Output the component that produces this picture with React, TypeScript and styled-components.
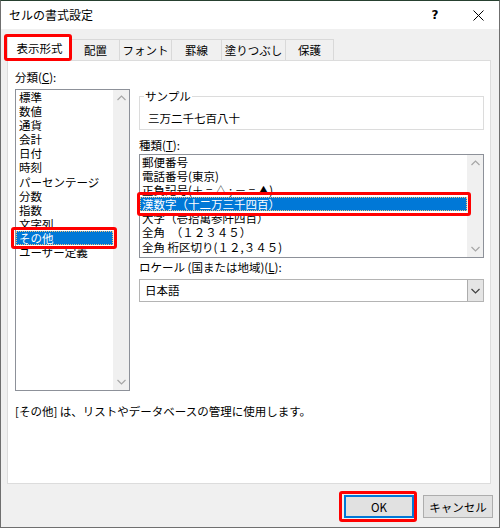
import React from 'react';
import styled, { createGlobalStyle, css } from 'styled-components';

const GlobalStyle = createGlobalStyle`
  html, body {
    margin: 0;
    padding: 0;
    background: #ffffff;
  }
  body {
    font-family: 'Noto Sans CJK JP', 'Noto Sans', sans-serif;
  }
`;

const Window = styled.div`
  box-sizing: border-box;
  width: 500px;
  height: 528px;
  display: flex;
  flex-direction: column;
  background: #f0f0f0;
  border: 1px solid #6f6f6f;
  border-top-color: #26402f;
  font-size: 11.5px;
  color: #000;
  overflow: hidden;
`;

const TitleBar = styled.div`
  flex: none;
  height: 28px;
  display: flex;
  align-items: center;
  background: #ffffff;
  padding-left: 8px;
`;

const Title = styled.div`
  flex: 1;
  font-size: 12px;
  line-height: 14px;
`;

const HelpButton = styled.div`
  width: 24px;
  margin-right: 10px;
  text-align: center;
  font-family: 'DejaVu Sans', sans-serif;
  font-size: 12px;
  font-weight: bold;
  line-height: 14px;
`;

const CloseButton = styled.div`
  width: 42px;
  height: 28px;
  display: flex;
  align-items: center;
  justify-content: center;
`;

const TabStrip = styled.div`
  position: relative;
  z-index: 1;
  flex: none;
  height: 24px;
  margin: 7px 0 0 6px;
  display: flex;
  align-items: flex-end;
`;

const Tab = styled.div<{ $active?: boolean; $width: number }>`
  position: relative;
  box-sizing: border-box;
  width: ${(p) => p.$width}px;
  height: ${(p) => (p.$active ? 25 : 21)}px;
  margin-bottom: ${(p) => (p.$active ? -1 : 0)}px;
  display: flex;
  align-items: center;
  justify-content: center;
  padding-bottom: ${(p) => (p.$active ? 2 : 0)}px;
  background: ${(p) => (p.$active ? '#ffffff' : '#f0f0f0')};
  border-top: 1px solid #d9d9d9;
  border-right: 1px solid #d9d9d9;
  border-left: ${(p) => (p.$active ? '1px solid #d9d9d9' : 'none')};
  line-height: 14px;
  white-space: nowrap;
`;

const Panel = styled.div`
  box-sizing: border-box;
  flex: none;
  height: 424px;
  margin: 0 8px 0 6px;
  padding: 9px 6px 0 7px;
  background: #ffffff;
  border: 1px solid #dcdcdc;
  display: grid;
  grid-template-columns: 115px 345px;
  column-gap: 9px;
  align-content: start;
`;

const Column = styled.div`
  display: flex;
  flex-direction: column;
  min-width: 0;
`;

const Label = styled.div<{ $gap?: number }>`
  margin-top: ${(p) => p.$gap ?? 0}px;
  line-height: 14px;
  height: 14px;
  white-space: nowrap;
`;

const ListBox = styled.div<{ $height: number; $gap: number }>`
  box-sizing: border-box;
  height: ${(p) => p.$height}px;
  margin-top: ${(p) => p.$gap}px;
  border: 1px solid #8d9199;
  background: #ffffff;
  display: flex;
`;

const ListItems = styled.div`
  flex: 1;
  min-width: 0;
`;

const ListItem = styled.div<{ $selected?: boolean; $indent: number }>`
  position: relative;
  height: 14.1px;
  line-height: 14.1px;
  padding-left: ${(p) => p.$indent}px;
  white-space: nowrap;
  ${(p) =>
    p.$selected &&
    css`
      background: #0078d7;
      color: #ffffff;
      outline: 1px dotted #f2c27a;
      outline-offset: -1px;
    `}
`;

const ScrollBar = styled.div`
  flex: none;
  width: 16px;
  padding: 2px 0;
  background: #f0f0f0;
  display: flex;
  flex-direction: column;
  justify-content: space-between;
  align-items: center;
`;

const Arrow = styled.div`
  height: 12px;
  display: flex;
  align-items: center;
  justify-content: center;
`;

const Callout = styled.span<{ $top: number; $right: number; $bottom: number; $left: number }>`
  position: absolute;
  z-index: 2;
  top: ${(p) => p.$top}px;
  right: ${(p) => p.$right}px;
  bottom: ${(p) => p.$bottom}px;
  left: ${(p) => p.$left}px;
  border: 3px solid #ff0000;
  border-radius: 3px;
  pointer-events: none;
`;

const Group = styled.fieldset`
  margin: 19px 0 0;
  padding: 8px 8px 4px;
  border: 1px solid #dcdcdc;
  min-width: 0;
`;

const GroupLegend = styled.legend`
  margin-left: -4px;
  padding: 0 1px;
  line-height: 14px;
`;

const SampleText = styled.div`
  line-height: 14px;
  height: 14px;
`;

const Select = styled.div`
  box-sizing: border-box;
  height: 23px;
  margin-top: 5px;
  border: 1px solid #b4b4b4;
  background: #ffffff;
  display: flex;
`;

const SelectValue = styled.div`
  flex: 1;
  padding-left: 5px;
  line-height: 21px;
`;

const DropButton = styled.div`
  box-sizing: border-box;
  width: 16px;
  background: #e5e5e5;
  border-left: 1px solid #acacac;
  display: flex;
  align-items: center;
  justify-content: center;
`;

const Description = styled.div`
  grid-column: 1 / -1;
  margin-top: 13px;
  line-height: 14px;
`;

const Footer = styled.div`
  flex: none;
  margin-top: 11px;
  padding-right: 6px;
  display: flex;
  justify-content: flex-end;
  gap: 9px;
`;

const Button = styled.button<{ $default?: boolean }>`
  position: relative;
  box-sizing: border-box;
  width: 70px;
  height: 23px;
  padding: 0;
  font-family: inherit;
  font-size: 11.5px;
  color: #000;
  background: #e1e1e1;
  border: 1px solid ${(p) => (p.$default ? '#0078d7' : '#adadad')};
  box-shadow: ${(p) => (p.$default ? 'inset 0 0 0 1px #0078d7' : 'none')};
`;

const ChevronUp = () => (
  <svg width="9" height="6" viewBox="0 0 9 6">
    <polyline points="0.5,5 4.5,1 8.5,5" fill="none" stroke="#a6a6a6" strokeWidth="1.2" />
  </svg>
);

const ChevronDown = ({ color = '#a6a6a6' }: { color?: string }) => (
  <svg width="9" height="6" viewBox="0 0 9 6">
    <polyline points="0.5,1 4.5,5 8.5,1" fill="none" stroke={color} strokeWidth="1.2" />
  </svg>
);

const tabs = [
  { name: '表示形式', width: 65 },
  { name: '配置', width: 48 },
  { name: 'フォント', width: 52 },
  { name: '罫線', width: 50 },
  { name: '塗りつぶし', width: 64 },
  { name: '保護', width: 48 },
];

const categories = [
  '標準',
  '数値',
  '通貨',
  '会計',
  '日付',
  '時刻',
  'パーセンテージ',
  '分数',
  '指数',
  '文字列',
  'その他',
  'ユーザー定義',
];

const kinds = [
  '郵便番号',
  '電話番号(東京)',
  '正負記号(＋ = △ ; － = ▲)',
  '漢数字（十二万三千四百）',
  '大字（壱拾萬参阡四百）',
  '全角　（１２３４５）',
  '全角 桁区切り(１２,３４５)',
];

const App: React.FC = () => {
  return (
    <>
      <GlobalStyle />
      <Window>
        <TitleBar>
          <Title>セルの書式設定</Title>
          <HelpButton>?</HelpButton>
          <CloseButton>
            <svg width="11" height="11" viewBox="0 0 11 11">
              <path d="M0.5 0.5 L10.5 10.5 M10.5 0.5 L0.5 10.5" stroke="#000" strokeWidth="1" />
            </svg>
          </CloseButton>
        </TitleBar>

        <TabStrip>
          {tabs.map((tab, i) => (
            <Tab key={tab.name} $active={i === 0} $width={tab.width}>
              {tab.name}
              {i === 0 && <Callout $top={-3} $right={-1} $bottom={0} $left={-4} />}
            </Tab>
          ))}
        </TabStrip>

        <Panel>
          <Column>
            <Label>
              分類(<u>C</u>):
            </Label>
            <ListBox $height={302} $gap={5}>
              <ListItems>
                {categories.map((c) => (
                  <ListItem key={c} $selected={c === 'その他'} $indent={3}>
                    {c}
                    {c === 'その他' && <Callout $top={-4} $right={-4} $bottom={-4} $left={-5} />}
                  </ListItem>
                ))}
              </ListItems>
              <ScrollBar>
                <Arrow>
                  <ChevronUp />
                </Arrow>
                <Arrow>
                  <ChevronDown />
                </Arrow>
              </ScrollBar>
            </ListBox>
          </Column>

          <Column>
            <Group>
              <GroupLegend>サンプル</GroupLegend>
              <SampleText>三万二千七百八十</SampleText>
            </Group>
            <Label $gap={8}>
              種類(<u>T</u>):
            </Label>
            <ListBox $height={104} $gap={2}>
              <ListItems>
                {kinds.map((k, i) => (
                  <ListItem key={k} $selected={i === 3} $indent={2}>
                    {k}
                    {i === 3 && <Callout $top={-5} $right={-4} $bottom={-5} $left={-3} />}
                  </ListItem>
                ))}
              </ListItems>
              <ScrollBar>
                <Arrow>
                  <ChevronUp />
                </Arrow>
                <Arrow>
                  <ChevronDown />
                </Arrow>
              </ScrollBar>
            </ListBox>
            <Label $gap={2}>
              ロケール (国または地域)(<u>L</u>):
            </Label>
            <Select>
              <SelectValue>日本語</SelectValue>
              <DropButton>
                <ChevronDown color="#404040" />
              </DropButton>
            </Select>
          </Column>

          <Description>[その他] は、リストやデータベースの管理に使用します。</Description>
        </Panel>

        <Footer>
          <Button $default>
            OK
            <Callout $top={-5} $right={-4} $bottom={-5} $left={-6} />
          </Button>
          <Button>キャンセル</Button>
        </Footer>
      </Window>
    </>
  );
};

export default App;
